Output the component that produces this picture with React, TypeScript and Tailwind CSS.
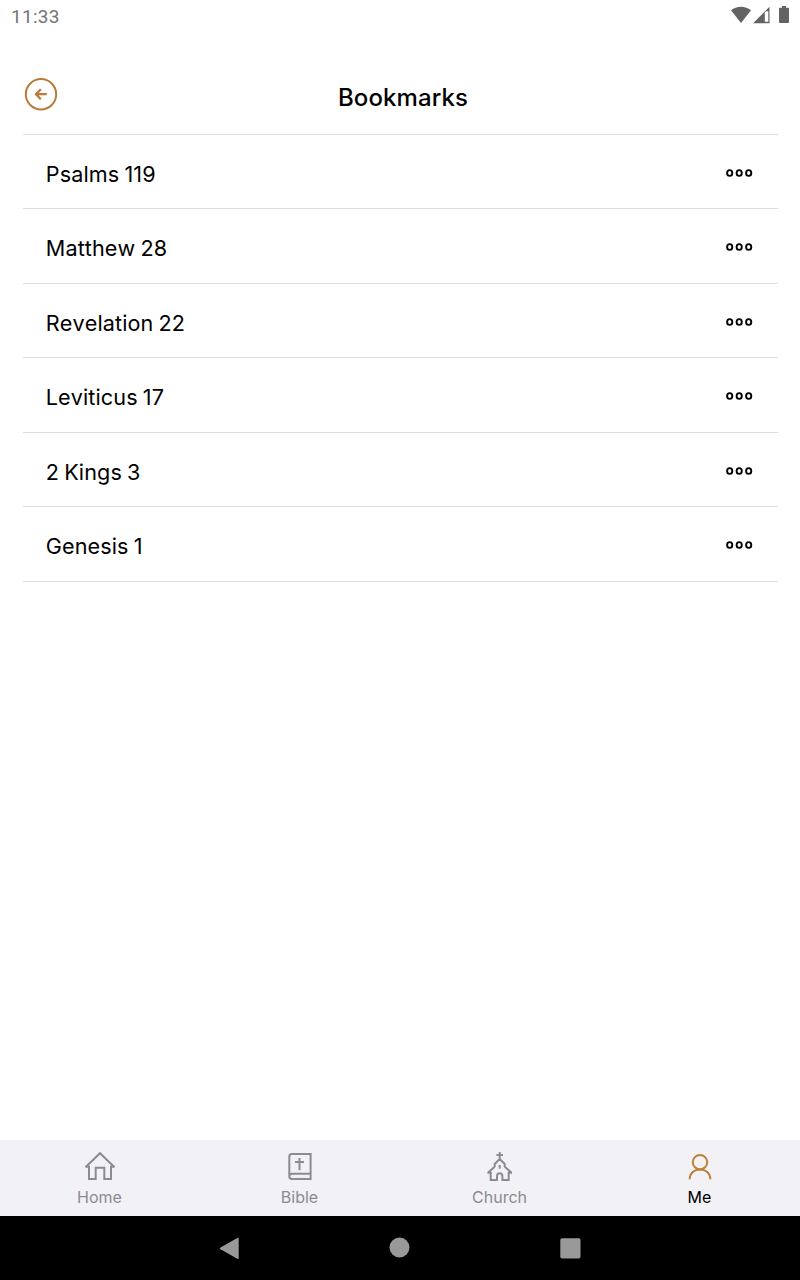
import React from "react";

const bookmarks = ["Psalms 119", "Matthew 28", "Revelation 22", "Leviticus 17", "2 Kings 3", "Genesis 1"];

function StatusBar() {
  return (
    <div className="flex h-8 items-start justify-between pl-[11px]">
      <span className="pt-[6px] font-[Roboto,sans-serif] text-[19px] leading-[22px] tracking-[0.3px] text-[#757575]">
        11:33
      </span>
      <svg width="80" height="32" viewBox="0 0 80 32" fill="#636363">
        <path d="M11 10.3C16.5 5.6 25.5 5.6 31 10.3L21 23Z" />
        <path fillRule="evenodd" d="M33 23.2L49.5 6.7V23.2ZM44.8 12.5V21.7H48.3V11.2H46.1Z" />
        <path d="M62 6H66V7.7H68A1 1 0 0 1 69 8.7V22A1 1 0 0 1 68 23H60A1 1 0 0 1 59 22V8.7A1 1 0 0 1 60 7.7H62Z" />
      </svg>
    </div>
  );
}

function BackIcon() {
  return (
    <svg width="34" height="34" viewBox="0 0 34 34" fill="none" stroke="#b97b37" strokeWidth="2">
      <circle cx="17" cy="17.3" r="15.2" />
      <path d="M22.8 17.2H12M16.8 12.2L12 17.2L16.8 22.2" strokeWidth="2.3" />
    </svg>
  );
}

function MoreIcon() {
  return (
    <svg width="28" height="10" viewBox="0 0 28 10" fill="none" stroke="#000" strokeWidth="1.9">
      <ellipse cx="4.7" cy="5" rx="2.6" ry="2.9" />
      <ellipse cx="14.2" cy="5" rx="2.6" ry="2.9" />
      <ellipse cx="23.7" cy="5" rx="2.6" ry="2.9" />
    </svg>
  );
}

function TabIcon({ children }: { children: React.ReactNode }) {
  return (
    <svg width="32" height="32" viewBox="0 0 32 32" fill="none" stroke="currentColor" strokeWidth="2">
      {children}
    </svg>
  );
}

const tabs = [
  {
    label: "Home",
    icon: <path d="M1.5 17.3L16 3.2L30.5 17.3M1.5 16.7H5V29H11.7V17.7H20.3V29H27V16.7H30.5" />,
  },
  {
    label: "Bible",
    icon: (
      <path d="M5.3 26.3V6.5Q5.3 4 7.8 4H26.6V29H8Q5.3 29 5.3 26.3Q5.3 23.7 8 23.7H26.6M15.5 8V20.3M11 12.1H20" />
    ),
  },
  {
    label: "Church",
    icon: (
      <>
        <path d="M15.7 2V9.5M12.4 5H19M10.7 17V14L15.7 9L20.7 14V17M10.7 16.8L4.4 22.3V22.8H6.7V30H13V26.4Q13 23.2 15.7 23.2Q18.4 23.2 18.4 26.4V30H24.7V22.8H27V22.3L20.7 16.8" />
        <path d="M15.7 15V18.7" />
      </>
    ),
  },
  {
    label: "Me",
    icon: (
      <>
        <circle cx="16" cy="12.2" r="7.2" />
        <path d="M5.7 29.3C5.7 23 10.3 19.4 16 19.4S26.3 23 26.3 29.3" />
      </>
    ),
  },
];

export default function App() {
  return (
    <div className="flex h-[1280px] w-[800px] flex-col bg-white font-[Inter,sans-serif] text-black">
      <StatusBar />
      <header className="mr-[22px] ml-[23px] grid h-[102.5px] grid-cols-[34px_1fr_34px] border-b border-[#dedede]">
        <button aria-label="Back" className="mt-[45px] ml-px size-[34px]">
          <BackIcon />
        </button>
        <h1 className="mt-[51px] ml-[5px] text-center text-[24px] leading-[30px] font-medium tracking-[0.12px]">
          Bookmarks
        </h1>
      </header>
      <ul className="mr-[22px] ml-[23px] flex-1">
        {bookmarks.map((name) => (
          <li
            key={name}
            className="flex h-[74.5px] items-center justify-between border-b border-[#dedede] pr-[25px] pl-[22.8px]"
          >
            <span className="pt-[5px] text-[21.6px] leading-7 tracking-[0.1px] [font-kerning:none] [word-spacing:-1px]">
              {name}
            </span>
            <button aria-label="More" className="pt-[3px]">
              <MoreIcon />
            </button>
          </li>
        ))}
      </ul>
      <nav className="grid h-[76px] grid-cols-4 bg-[#f2f1f6]">
        {tabs.map(({ label, icon }) => {
          const active = label === "Me";
          return (
            <button key={label} className="flex flex-col items-center pt-[10px]">
              <span className={`h-[37px] ${active ? "text-[#be7f38]" : "text-[#8b8b90]"}`}>
                <TabIcon>{icon}</TabIcon>
              </span>
              <span className={`pr-px text-[16px] leading-5 ${active ? "text-black" : "text-[#8b8b90]"}`}>
                {label}
              </span>
            </button>
          );
        })}
      </nav>
      <div className="flex h-16 justify-center bg-black">
        <svg width="400" height="64" viewBox="0 0 400 64" fill="#999">
          <path d="M20.5 31.4L37.3 21.9Q38.7 21.3 38.7 22.8V42Q38.7 43.4 37.3 42.8L20.5 33.2Q19 32.3 20.5 31.4Z" />
          <circle cx="199.5" cy="31.5" r="10" />
          <rect x="360.3" y="22.3" width="20.2" height="20.2" rx="1.7" />
        </svg>
      </div>
    </div>
  );
}
